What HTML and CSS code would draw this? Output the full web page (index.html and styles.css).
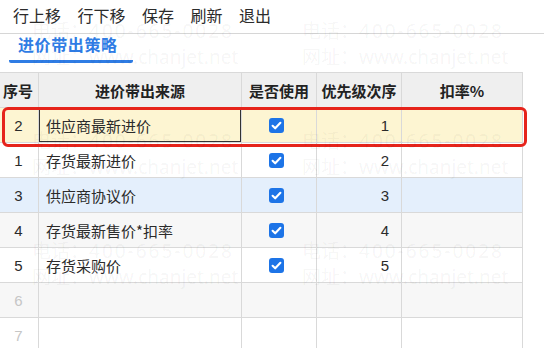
FILE: index.html
```html
<!DOCTYPE html>
<html lang="zh-CN">
<head>
<meta charset="utf-8">
<title>进价带出策略</title>
<link rel="stylesheet" href="styles.css">
</head>
<body>
<div class="page">
  <div class="toolbar">
    <span class="tool">行上移</span>
    <span class="tool">行下移</span>
    <span class="tool">保存</span>
    <span class="tool">刷新</span>
    <span class="tool">退出</span>
  </div>
  <div class="tabs">
    <div class="tab active">进价带出策略</div>
  </div>
  <table class="grid">
    <colgroup>
      <col class="c-no"><col class="c-src"><col class="c-use"><col class="c-pri"><col class="c-rate">
    </colgroup>
    <thead>
      <tr><th>序号</th><th>进价带出来源</th><th>是否使用</th><th>优先级次序</th><th>扣率%</th></tr>
    </thead>
    <tbody>
      <tr class="sel">
        <td class="no">2</td><td class="name editing">供应商最新进价</td>
        <td class="use"><span class="cb"><svg viewBox="0 0 15 15" width="15" height="15"><path d="M3.6 7.8 L6.2 10.3 L11.4 4.8" fill="none" stroke="#fff" stroke-width="2.1" stroke-linecap="round" stroke-linejoin="round"/></svg></span></td>
        <td class="pri">1</td><td></td>
      </tr>
      <tr>
        <td class="no">1</td><td class="name">存货最新进价</td>
        <td class="use"><span class="cb"><svg viewBox="0 0 15 15" width="15" height="15"><path d="M3.6 7.8 L6.2 10.3 L11.4 4.8" fill="none" stroke="#fff" stroke-width="2.1" stroke-linecap="round" stroke-linejoin="round"/></svg></span></td>
        <td class="pri">2</td><td></td>
      </tr>
      <tr class="hover">
        <td class="no">3</td><td class="name">供应商协议价</td>
        <td class="use"><span class="cb"><svg viewBox="0 0 15 15" width="15" height="15"><path d="M3.6 7.8 L6.2 10.3 L11.4 4.8" fill="none" stroke="#fff" stroke-width="2.1" stroke-linecap="round" stroke-linejoin="round"/></svg></span></td>
        <td class="pri">3</td><td></td>
      </tr>
      <tr class="stripe">
        <td class="no">4</td><td class="name">存货最新售价*扣率</td>
        <td class="use"><span class="cb"><svg viewBox="0 0 15 15" width="15" height="15"><path d="M3.6 7.8 L6.2 10.3 L11.4 4.8" fill="none" stroke="#fff" stroke-width="2.1" stroke-linecap="round" stroke-linejoin="round"/></svg></span></td>
        <td class="pri">4</td><td></td>
      </tr>
      <tr>
        <td class="no">5</td><td class="name">存货采购价</td>
        <td class="use"><span class="cb"><svg viewBox="0 0 15 15" width="15" height="15"><path d="M3.6 7.8 L6.2 10.3 L11.4 4.8" fill="none" stroke="#fff" stroke-width="2.1" stroke-linecap="round" stroke-linejoin="round"/></svg></span></td>
        <td class="pri">5</td><td></td>
      </tr>
      <tr class="stripe empty">
        <td class="no">6</td><td></td><td></td><td></td><td></td>
      </tr>
      <tr class="empty">
        <td class="no">7</td><td></td><td></td><td></td><td></td>
      </tr>
    </tbody>
  </table>
  <div class="mark-box"></div>
  <div class="watermark">
    <div class="wm" style="left:32px;top:18px"><div class="l1">电话：<span class="d">400-665-0028</span></div><div class="l2">网址：www.chanjet.net</div></div>
    <div class="wm" style="left:302px;top:18px"><div class="l1">电话：<span class="d">400-665-0028</span></div><div class="l2">网址：www.chanjet.net</div></div>
    <div class="wm" style="left:32px;top:128px"><div class="l1">电话：<span class="d">400-665-0028</span></div><div class="l2">网址：www.chanjet.net</div></div>
    <div class="wm" style="left:302px;top:128px"><div class="l1">电话：<span class="d">400-665-0028</span></div><div class="l2">网址：www.chanjet.net</div></div>
    <div class="wm" style="left:32px;top:238px"><div class="l1">电话：<span class="d">400-665-0028</span></div><div class="l2">网址：www.chanjet.net</div></div>
    <div class="wm" style="left:302px;top:238px"><div class="l1">电话：<span class="d">400-665-0028</span></div><div class="l2">网址：www.chanjet.net</div></div>
  </div>
</div>
</body>
</html>
```
FILE: styles.css
```css
html, body {
  margin: 0;
  padding: 0;
  background: #fff;
}
body {
  font-family: "Liberation Sans", "Noto Sans CJK SC", sans-serif;
  color: #2b2b2b;
  width: 544px;
  height: 348px;
  overflow: hidden;
}
.page {
  position: relative;
  width: 544px;
  height: 348px;
  overflow: hidden;
}
.toolbar {
  display: flex;
  gap: 16.5px;
  height: 34px;
  box-sizing: border-box;
  padding: 5px 0 0 13px;
  border-bottom: 1px solid #d6d6d6;
  font-family: "Noto Sans CJK SC", sans-serif;
  font-size: 16px;
  line-height: 20px;
  color: #2b2b2b;
}
.tabs {
  height: 38px;
  box-sizing: border-box;
  padding-left: 9px;
}
.tab {
  width: 124px;
  box-sizing: border-box;
  padding: 0 0 6px 9px;
  font-family: "Noto Sans CJK SC", sans-serif;
  font-weight: bold;
  font-size: 16px;
  line-height: 20px;
  color: #2f7ce4;
  letter-spacing: 0.6px;
}
.tab.active {
  border-bottom: 3px solid #2f7ce4;
  border-radius: 0 0 2px 2px;
}
.grid {
  border-collapse: collapse;
  table-layout: fixed;
  width: 525px;
  margin-left: -3px;
  font-size: 15px;
}
.c-no { width: 41px; }
.c-src { width: 203px; }
.c-use { width: 75px; }
.c-pri { width: 85px; }
.c-rate { width: 121px; }
.grid th, .grid td {
  border: 1px solid #d9d9d9;
  height: 35px;
  padding: 0;
  box-sizing: border-box;
  white-space: nowrap;
  overflow: hidden;
}
.grid th {
  background: #efefef;
  font-family: "Noto Sans CJK SC", sans-serif;
  font-weight: bold;
  font-size: 15px;
  color: #222;
  text-align: center;
}
.grid td.no {
  text-align: center;
  padding-left: 1px;
}
.grid td.name {
  padding-left: 7px;
  font-family: "Noto Sans CJK SC", sans-serif;
}
.grid td.use {
  text-align: center;
  line-height: 0;
  padding-right: 5px;
}
.grid td.pri {
  text-align: right;
  padding-right: 12px;
}
.grid tr.sel td { background: #fdf5d2; }
.grid tr.hover td { background: #e4effc; }
.grid tr.stripe td { background: #f7f7f7; }
.grid tr.empty td.no { color: #c6c6c6; }
.grid td.editing {
  box-shadow: inset 0 0 0 1px #333;
}
.cb {
  display: inline-block;
  width: 15px;
  height: 15px;
  border-radius: 3px;
  background: #1d74e7;
  vertical-align: middle;
}
.cb svg { display: block; }
.mark-box {
  position: absolute;
  left: 2px;
  top: 107px;
  width: 525px;
  height: 40px;
  box-sizing: border-box;
  border: 3px solid #e6241b;
  border-radius: 6px;
  pointer-events: none;
}
.watermark {
  position: absolute;
  inset: 0;
  pointer-events: none;
}
.wm {
  position: absolute;
  font-family: "Noto Sans", "Noto Sans CJK SC", sans-serif;
  font-size: 19px;
  line-height: 26px;
  color: rgba(0, 0, 0, 0.05);
  white-space: nowrap;
}
.wm .d { letter-spacing: 2px; }
```
